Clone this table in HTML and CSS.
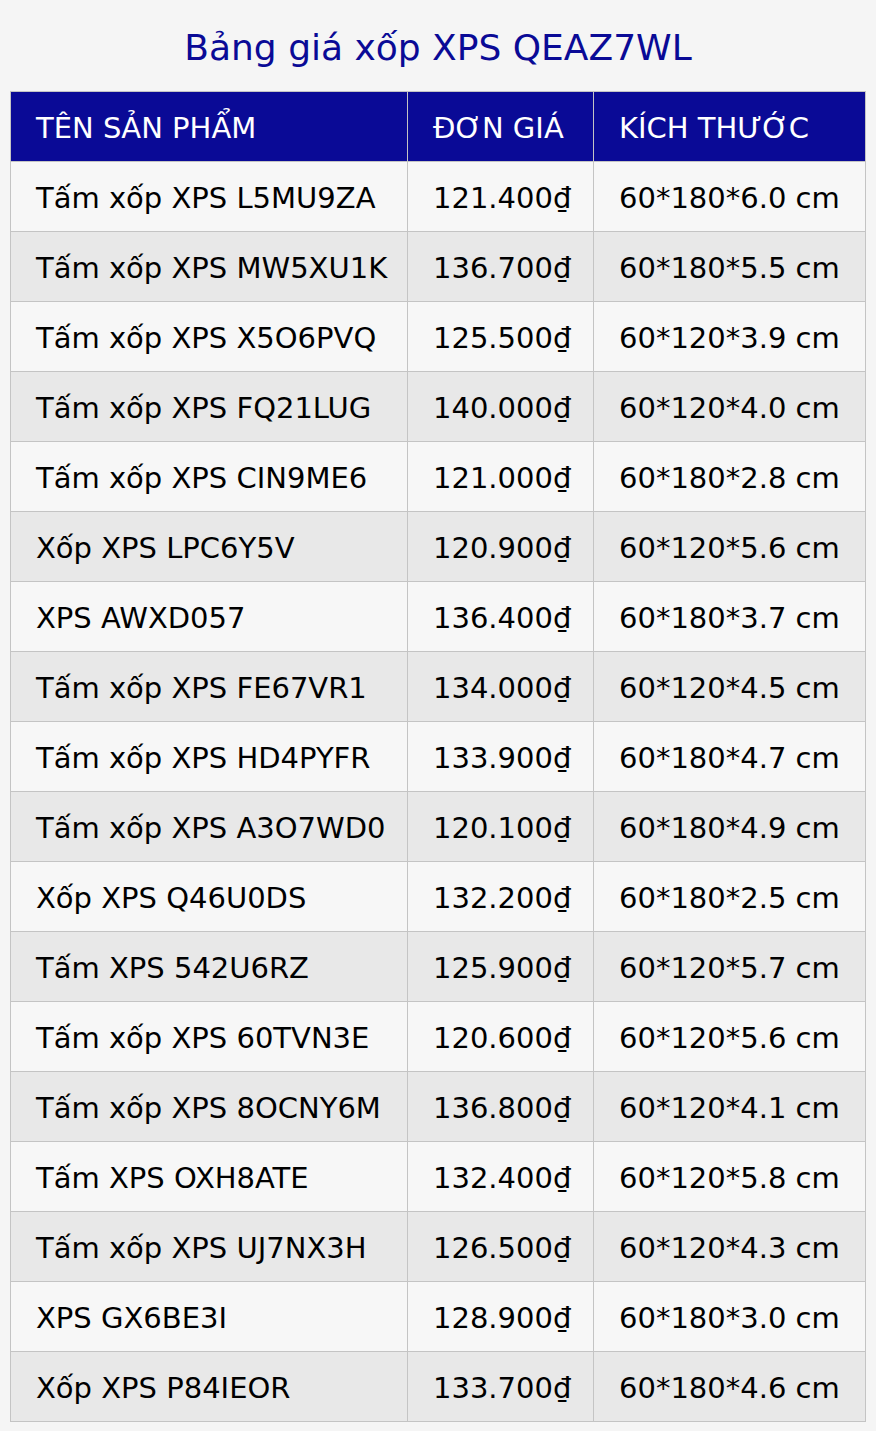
FILE: index.html
```html
<!DOCTYPE html>
<html lang="vi">
<head>
<meta charset="utf-8">
<title>Bảng giá xốp XPS QEAZ7WL</title>
<link rel="stylesheet" href="styles.css">
</head>
<body>
<h1 class="title">Bảng giá xốp XPS QEAZ7WL</h1>
<table class="price-table">
  <colgroup>
    <col class="c-name"><col class="c-price"><col class="c-size">
  </colgroup>
  <thead>
    <tr><th>TÊN SẢN PHẨM</th><th>ĐƠN GIÁ</th><th>KÍCH THƯỚC</th></tr>
  </thead>
  <tbody>
    <tr><td>Tấm xốp XPS L5MU9ZA</td><td class="num">121.400₫</td><td>60*180*6.0 cm</td></tr>
    <tr><td>Tấm xốp XPS MW5XU1K</td><td class="num">136.700₫</td><td>60*180*5.5 cm</td></tr>
    <tr><td>Tấm xốp XPS X5O6PVQ</td><td class="num">125.500₫</td><td>60*120*3.9 cm</td></tr>
    <tr><td>Tấm xốp XPS FQ21LUG</td><td class="num">140.000₫</td><td>60*120*4.0 cm</td></tr>
    <tr><td>Tấm xốp XPS CIN9ME6</td><td class="num">121.000₫</td><td>60*180*2.8 cm</td></tr>
    <tr><td>Xốp XPS LPC6Y5V</td><td class="num">120.900₫</td><td>60*120*5.6 cm</td></tr>
    <tr><td>XPS AWXD057</td><td class="num">136.400₫</td><td>60*180*3.7 cm</td></tr>
    <tr><td>Tấm xốp XPS FE67VR1</td><td class="num">134.000₫</td><td>60*120*4.5 cm</td></tr>
    <tr><td>Tấm xốp XPS HD4PYFR</td><td class="num">133.900₫</td><td>60*180*4.7 cm</td></tr>
    <tr><td>Tấm xốp XPS A3O7WD0</td><td class="num">120.100₫</td><td>60*180*4.9 cm</td></tr>
    <tr><td>Xốp XPS Q46U0DS</td><td class="num">132.200₫</td><td>60*180*2.5 cm</td></tr>
    <tr><td>Tấm XPS 542U6RZ</td><td class="num">125.900₫</td><td>60*120*5.7 cm</td></tr>
    <tr><td>Tấm xốp XPS 60TVN3E</td><td class="num">120.600₫</td><td>60*120*5.6 cm</td></tr>
    <tr><td>Tấm xốp XPS 8OCNY6M</td><td class="num">136.800₫</td><td>60*120*4.1 cm</td></tr>
    <tr><td>Tấm XPS OXH8ATE</td><td class="num">132.400₫</td><td>60*120*5.8 cm</td></tr>
    <tr><td>Tấm xốp XPS UJ7NX3H</td><td class="num">126.500₫</td><td>60*120*4.3 cm</td></tr>
    <tr><td>XPS GX6BE3I</td><td class="num">128.900₫</td><td>60*180*3.0 cm</td></tr>
    <tr><td>Xốp XPS P84IEOR</td><td class="num">133.700₫</td><td>60*180*4.6 cm</td></tr>
  </tbody>
</table>
</body>
</html>
```
FILE: styles.css
```css
html, body {
  margin: 0;
  padding: 0;
  background: #f5f5f5;
}
body {
  font-family: Verdana, "DejaVu Sans", sans-serif;
  color: #000;
  padding: 0 10px;
}
.title {
  margin: 0;
  padding: 26px 0 0;
  height: 65px;
  box-sizing: border-box;
  text-align: center;
  font-size: 36px;
  line-height: 44px;
  font-weight: normal;
  color: #0a0a96;
}
.price-table {
  width: 855px;
  table-layout: fixed;
  border-collapse: collapse;
  margin-top: 26px;
  font-size: 29px;
}
.price-table th,
.price-table td {
  border: 1px solid #c4c4c4;
  height: 70px;
  padding: 2px 0 0 25px;
  text-align: left;
  vertical-align: middle;
  white-space: nowrap;
  overflow: hidden;
  line-height: 34px;
  box-sizing: border-box;
}
.price-table th {
  background: #0a0a96;
  color: #fff;
  font-weight: normal;
}
.c-name { width: 397px; }
.c-price { width: 186px; }
.c-size { width: 272px; }
.price-table tbody tr:nth-child(odd) td { background: #f7f7f7; }
.price-table tbody tr:nth-child(even) td { background: #e8e8e8; }
```
